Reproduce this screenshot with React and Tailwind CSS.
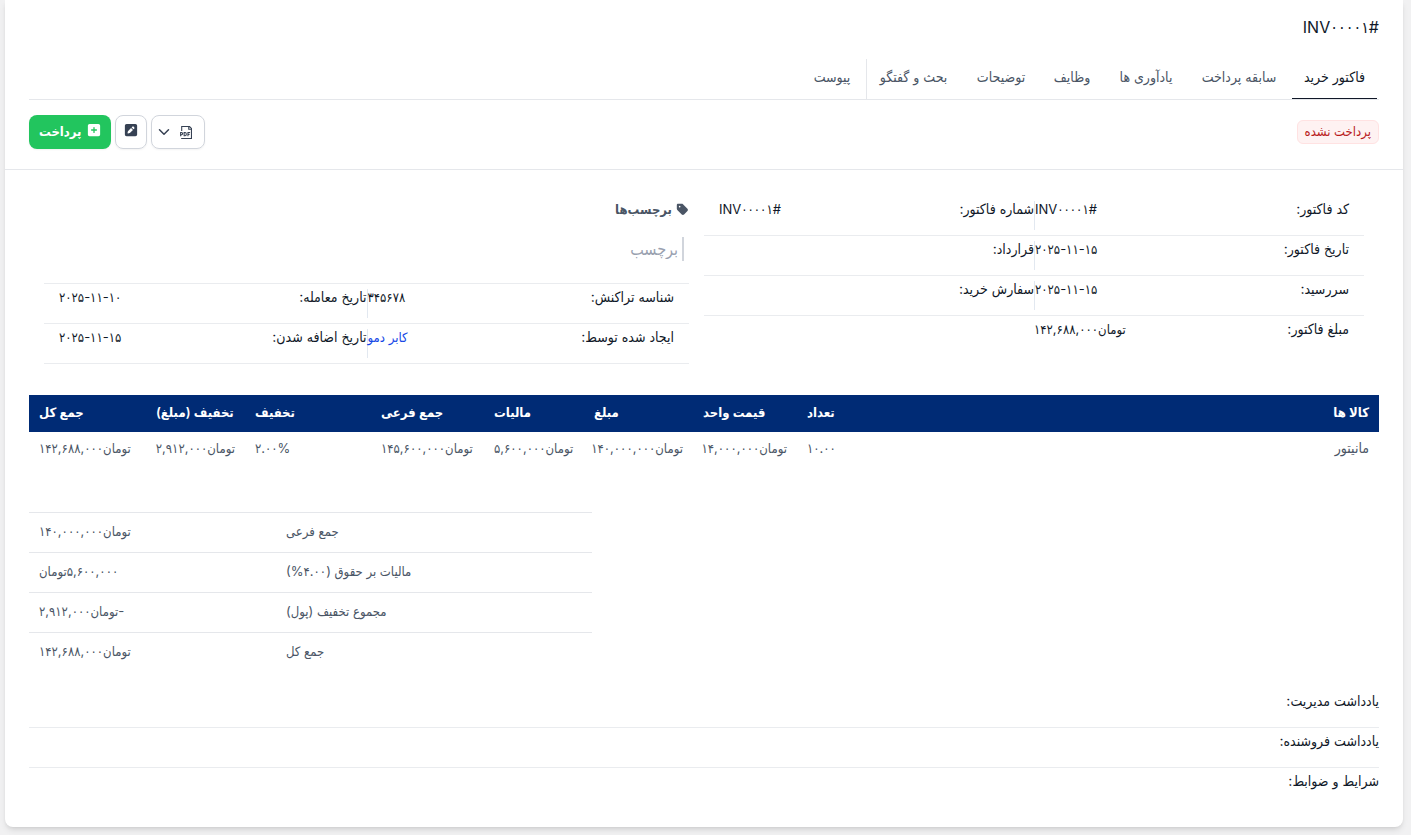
import { FaTag, FaSquarePlus, FaSquarePen } from 'react-icons/fa6';
import { FiChevronDown } from 'react-icons/fi';
import { GrDocumentPdf } from 'react-icons/gr';

const tabs = [
  { label: 'فاکتور خرید', width: 'w-[85px]', active: true },
  { label: 'سابقه پرداخت', width: 'w-[98px]' },
  { label: 'یادآوری ها', width: 'w-[80px]' },
  { label: 'وظایف', width: 'w-[60px]' },
  { label: 'توضیحات', width: 'w-[74px]' },
  { label: 'بحث و گفتگو', width: 'w-[93px]' },
  { label: 'پیوست', width: 'w-[62px]', separated: true },
];

const columns = [
  { label: 'کالا ها', value: 'مانیتور', width: '' },
  { label: 'تعداد', value: '۱۰.۰۰', width: 'w-[81px]' },
  { label: 'قیمت واحد', value: 'تومان۱۴,۰۰۰,۰۰۰', width: 'w-[104px]' },
  { label: 'مبلغ', value: 'تومان۱۴۰,۰۰۰,۰۰۰', width: 'w-[109px]' },
  { label: 'مالیات', value: 'تومان۵,۶۰۰,۰۰۰', width: 'w-[100px]' },
  { label: 'جمع فرعی', value: 'تومان۱۴۵,۶۰۰,۰۰۰', width: 'w-[113px]' },
  { label: 'تخفیف', value: '۲.۰۰%', width: 'w-[126px]' },
  { label: 'تخفیف (مبلغ)', value: 'تومان۲,۹۱۲,۰۰۰', width: 'w-[99px]' },
  { label: 'جمع کل', value: 'تومان۱۴۲,۶۸۸,۰۰۰', width: 'w-[117px]' },
];

const totals = [
  { label: 'جمع فرعی', value: 'تومان۱۴۰,۰۰۰,۰۰۰' },
  { label: 'مالیات بر حقوق (۴.۰۰%)', value: '۵,۶۰۰,۰۰۰تومان' },
  { label: 'مجموع تخفیف (پول)', value: '-تومان۲,۹۱۲,۰۰۰' },
  { label: 'جمع کل', value: 'تومان۱۴۲,۶۸۸,۰۰۰' },
];

const notes = ['یادداشت مدیریت:', 'یادداشت فروشنده:', 'شرایط و ضوابط:'];

// A label and its value, pushed to the two ends of half a row
function Field({ label, children, divider }) {
  return (
    <div className={divider ? 'flex w-1/2 justify-between border-l border-slate-200' : 'flex w-1/2 justify-between'}>
      <dt className="text-[14px] leading-4">{label}</dt>
      <dd className="leading-4">{children}</dd>
    </div>
  );
}

function DetailRow({ children, border = true }) {
  return (
    <dl className={border ? 'flex h-10 border-b border-gray-200/80 px-[15px] py-[5px]' : 'flex h-10 px-[15px] py-[5px]'}>
      {children}
    </dl>
  );
}

export default function App() {
  return (
    <div
      dir="rtl"
      lang="fa"
      className="min-h-screen bg-[#f1f1f2] pr-2 pl-[5px] pb-2 font-[Inter,'DejaVu_Sans_Condensed','DejaVu_Sans',sans-serif] text-[13px] leading-[18px] text-gray-900"
    >
      <main className="rounded-b-lg bg-white pb-[38px] shadow-md">
        <header className="border-b border-gray-200 px-6 pb-5">
          <h1 className="pt-[15px] text-base leading-6">#INV۰۰۰۰۱</h1>

          <nav className="mt-5 flex gap-1 border-b border-gray-200 pr-[2px] text-[14px] whitespace-nowrap text-gray-600">
            {tabs.map(tab => (
              <div
                key={tab.label}
                className={tab.separated ? '-mr-1 border-r border-gray-200 pr-[3px]' : ''}
              >
                <button
                  type="button"
                  className={`${tab.width} block h-10 border-b pb-[3px] text-center ${tab.active ? 'border-gray-900 text-gray-900' : 'border-transparent'}`}
                >
                  {tab.label}
                </button>
              </div>
            ))}
          </nav>

          <div className="mt-[15px] flex items-start justify-between">
            <span className="mt-[5px] rounded-md border border-red-100 bg-red-50 px-[7px] pt-px pb-[3px] text-[#b91c1c]">
              پرداخت نشده
            </span>
            <div className="flex gap-1">
              <button
                type="button"
                aria-label="PDF"
                className="flex h-[34px] w-[54px] items-center justify-center gap-[6px] rounded-lg border border-gray-300 pr-2 text-gray-700 shadow-xs"
              >
                <GrDocumentPdf size={13} />
                <FiChevronDown size={18} />
              </button>
              <button
                type="button"
                aria-label="ویرایش"
                className="flex h-[34px] w-8 items-start justify-center rounded-lg border border-gray-300 pt-[7px] text-gray-700 shadow-xs"
              >
                <FaSquarePen size={14} />
              </button>
              <button
                type="button"
                className="flex h-[34px] items-start gap-[5px] rounded-lg bg-[#22c55e] px-[10px] pt-2 font-semibold text-white shadow-xs"
              >
                <FaSquarePlus size={14} />
                <span className="leading-4">پرداخت</span>
              </button>
            </div>
          </div>
        </header>

        <section className="mt-[26px] grid grid-cols-2">
          <div className="pr-[39px]">
            <DetailRow>
              <Field label="کد فاکتور:" divider>#INV۰۰۰۰۱</Field>
              <Field label="شماره فاکتور:">#INV۰۰۰۰۱</Field>
            </DetailRow>
            <DetailRow>
              <Field label="تاریخ فاکتور:" divider>۲۰۲۵-۱۱-۱۵</Field>
              <Field label="قرارداد:" />
            </DetailRow>
            <DetailRow>
              <Field label="سررسید:" divider>۲۰۲۵-۱۱-۱۵</Field>
              <Field label="سفارش خرید:" />
            </DetailRow>
            <DetailRow border={false}>
              <Field label="مبلغ فاکتور:">تومان۱۴۲,۶۸۸,۰۰۰</Field>
            </DetailRow>
          </div>

          <div className="pr-[15px] pl-[39px]">
            <label htmlFor="tags" className="flex items-center gap-1 pt-1 font-bold text-gray-600">
              <FaTag size={13} />
              برچسب‌ها
            </label>
            <div className="mt-[19px] mb-[22px] pr-[5px]">
              <input
                id="tags"
                type="text"
                placeholder="برچسب"
                className="block h-6 w-40 border-r-2 border-gray-300 pr-1 text-base outline-none placeholder:text-gray-400"
              />
            </div>
            <div className="border-t border-gray-200/80">
              <DetailRow>
                <Field label="شناسه تراکنش:" divider>۳۴۵۶۷۸</Field>
                <Field label="تاریخ معامله:">۲۰۲۵-۱۱-۱۰</Field>
              </DetailRow>
              <DetailRow>
                <Field label="ایجاد شده توسط:" divider>
                  <a href="#profile" className="text-blue-700">کابر دمو</a>
                </Field>
                <Field label="تاریخ اضافه شدن:">۲۰۲۵-۱۱-۱۵</Field>
              </DetailRow>
            </div>
          </div>
        </section>

        <section className="mt-[31px] px-6">
          <table className="w-full table-fixed whitespace-nowrap">
            <thead className="bg-[#002b75] text-white">
              <tr className="h-[37px]">
                {columns.map((col, i) => (
                  <th
                    key={col.label}
                    scope="col"
                    className={`${col.width} px-[10px] pb-1 font-semibold ${i === 0 ? 'text-right' : 'text-left'}`}
                  >
                    {col.label}
                  </th>
                ))}
              </tr>
            </thead>
            <tbody className="text-gray-600">
              <tr className="h-[35px]">
                {columns.map((col, i) => (
                  <td key={col.label} className={`px-[10px] pb-1 ${i === 0 ? 'text-right text-[14px]' : 'text-left'}`}>
                    {col.value}
                  </td>
                ))}
              </tr>
            </tbody>
          </table>

          <div className="mt-[45px] flex justify-end">
            <table className="w-5/12 text-gray-600">
              <tbody>
                {totals.map(row => (
                  <tr key={row.label} className="h-10 border-t border-gray-200">
                    <th scope="row" className="px-[10px] pb-1 text-left font-normal">{row.label}</th>
                    <td className="w-[247px] px-[10px] pb-1 text-left">{row.value}</td>
                  </tr>
                ))}
              </tbody>
            </table>
          </div>

          <div className="mt-[15px] text-[14px] leading-4">
            {notes.map(note => (
              <p key={note} className="h-10 border-b border-gray-200/80 pt-[5px] last:h-auto last:border-b-0">
                {note}
              </p>
            ))}
          </div>
        </section>
      </main>
    </div>
  );
}
